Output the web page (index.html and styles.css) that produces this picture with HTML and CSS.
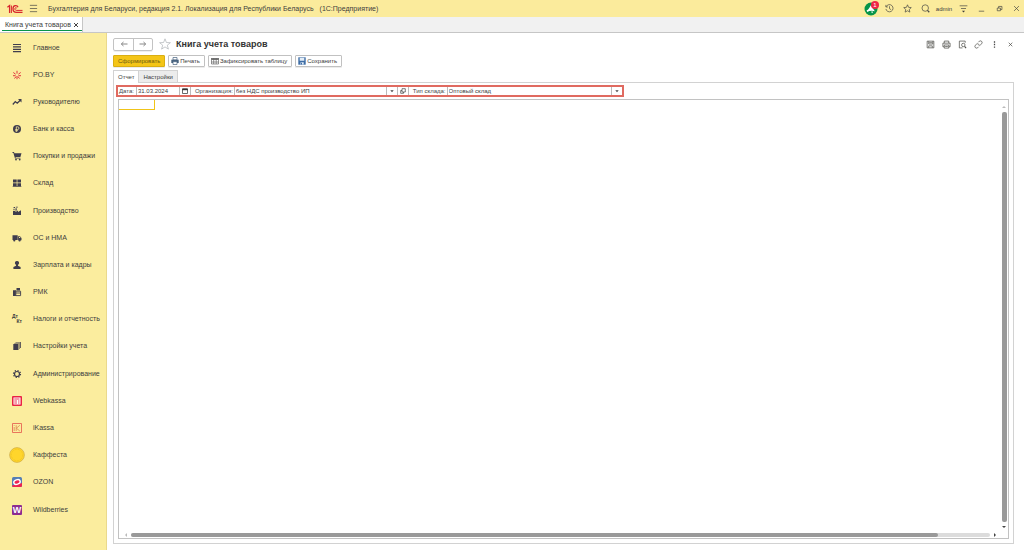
FILE: index.html
```html
<!DOCTYPE html>
<html lang="ru">
<head>
<meta charset="utf-8">
<meta name="viewport" content="width=device-width, initial-scale=1">
<title>Книга учета товаров</title>
<link rel="stylesheet" href="styles.css">
</head>
<body class="app">
<header class="topbar">
  <svg class="logo" viewBox="0 0 16 10" aria-label="1С"><g fill="none" stroke="#d8272d" stroke-width="1.3"><path d="M.4 3.2 2.6 1.5V9"/><path d="M4.4 1.5V9" stroke-width="1"/><path d="M11 3.3C10.300 1 6 .8 6 4.700 6 7.600 7.600 8.400 9.500 8.400H15.500"/><path d="M9.800 4.300C9.200 3.300 7.800 3.500 7.900 4.900 8 6.300 8.900 6.400 10 6.400H15.500" stroke-width="1"/></g></svg>
  <button class="icon-btn" aria-label="Меню"><svg class="ic ic-menu" viewBox="0 0 10 10"><path d="M1 1.500H9M1 5H9M1 8.500H9"/></svg></button>
  <h1 class="app-title"><span>Бухгалтерия для Беларуси, редакция 2.1. Локализация для Республики Беларусь</span><span>(1С:Предприятие)</span></h1>
  <div class="top-actions">
    <button class="icon-btn notify" aria-label="Уведомления"><svg class="ic-bell" viewBox="0 0 14 14"><circle cx="7" cy="7" r="6.500" fill="#079548"/><path d="M2.600 8.300C4.500 7.700 5.500 5.800 6.800 3.200L10.800 9.300C8.500 8.300 5.500 8.500 3.200 10ZM6.800 9.800 9 9.600 8.400 11.200Z" fill="#fff"/></svg><span class="badge">1</span></button>
    <button class="icon-btn" aria-label="История"><svg class="ic" viewBox="0 0 10 10"><path d="M1.300 3A4 4 0 1 1 1 5.500M1 1V3.300H3.200M5 2.500V5.200L6.800 6.300"/></svg></button>
    <button class="icon-btn" aria-label="Избранное"><svg class="ic" viewBox="0 0 10 10"><path d="M5 .9 6.200 3.700 9.200 4 7 6 7.600 9 5 7.500 2.400 9 3 6 .8 4 3.800 3.700Z"/></svg></button>
    <button class="icon-btn" aria-label="Поиск"><svg class="ic" viewBox="0 0 10 10"><circle cx="4.700" cy="4.500" r="3.600"/><path d="M7.200 7 9.200 9.200" stroke-width="1.400"/></svg></button>
    <button class="user">admin</button>
    <button class="icon-btn" aria-label="Настройки панели"><svg class="ic" viewBox="0 0 10 10"><path d="M.7 2H9.300M2.200 5H7.800"/><path d="M3.300 7.500H6.700L5 9.500Z" fill="#3b3b3b" stroke="none"/></svg></button>
    <button class="icon-btn" aria-label="Свернуть"><svg class="ic" viewBox="0 0 10 10"><path d="M2 8H8"/></svg></button>
    <button class="icon-btn" aria-label="Восстановить"><svg class="ic" viewBox="0 0 10 10"><path d="M2.500 4.500H6V7.500H2.500ZM4 4.500V2.700H7.700V6.200H6"/></svg></button>
    <button class="icon-btn close" aria-label="Закрыть"><svg class="ic" viewBox="0 0 10 10"><path d="M2.300 2.300 7.700 7.700M7.700 2.300 2.300 7.700"/></svg></button>
  </div>
</header>
<div class="tabbar">
  <div class="doc-tab"><span>Книга учета товаров</span><button class="tab-close" aria-label="Закрыть вкладку"><svg viewBox="0 0 6 6"><path d="M1 1 5 5M5 1 1 5" stroke="#444" stroke-width="1"/></svg></button></div>
</div>
<div class="workspace">
  <nav class="sidebar">
    <a class="item" href="#"><span class="pic"><svg viewBox="0 0 10 10"><path d="M1 1.500H9M1 3.900H9M1 6.300H9M1 8.700H9" stroke="#3f3d4d" stroke-width="1.200"/></svg></span>Главное</a>
    <a class="item" href="#"><span class="pic"><svg viewBox="0 0 10 10"><path d="M5 .8V3.600M5 6.400V9.200M1.300 2.500 3.600 4.200M8.700 2.500 6.400 4.200M1 5.700H3.600M9 5.700H6.400M2.500 8.500 4.200 6.400M7.500 8.500 5.800 6.400" stroke="#e0343e" stroke-width="1"/></svg></span>PO.BY</a>
    <a class="item" href="#"><span class="pic"><svg viewBox="0 0 10 10"><path d="M.8 7.500 3.300 4.600 5.200 6.200 8.300 3.200" fill="none" stroke="#3f3d4d" stroke-width="1.300"/><path d="M6 2H9.500V5.500Z" fill="#3f3d4d"/></svg></span>Руководителю</a>
    <a class="item" href="#"><span class="pic"><svg viewBox="0 0 10 10"><circle cx="5" cy="5" r="4" fill="#3f3d4d"/><path d="M4.300 8V2.800H5.600A1.300 1.300 0 0 1 5.600 5.500H3.300M3.300 6.700H6" fill="none" stroke="#fbed9e" stroke-width=".8"/></svg></span>Банк и касса</a>
    <a class="item" href="#"><span class="pic"><svg viewBox="0 0 10 10"><path d="M.5 1H2L2.400 2.200H9.500L8.400 6H3.500L3.700 6.800H8.500V7.600H3L1.400 1.900H.5Z" fill="#3f3d4d"/><circle cx="4" cy="8.600" r=".9" fill="#3f3d4d"/><circle cx="7.700" cy="8.600" r=".9" fill="#3f3d4d"/></svg></span>Покупки и продажи</a>
    <a class="item" href="#"><span class="pic"><svg viewBox="0 0 10 10"><path d="M1 1.500H4.700V4.600H1ZM5.400 1.500H9V4.600H5.400ZM1 5.300H4.700V8H1ZM5.400 5.300H9V8H5.400ZM.7 8.300H9.300V9H.7Z" fill="#3f3d4d"/></svg></span>Склад</a>
    <a class="item" href="#"><span class="pic"><svg viewBox="0 0 10 10"><path d="M1 9V5H3.500V6L6 4.500V6L9 4.200V9ZM1.500 4.300V2.700H2.500V4.300ZM1.600 1H3V2H1.600ZM3.500 4.800V2.300H4.700V4.500ZM3.800 .8H5.800V1.600H3.800Z" fill="#3f3d4d"/></svg></span>Производство</a>
    <a class="item" href="#"><span class="pic"><svg viewBox="0 0 10 10"><path d="M.5 2.300H5.700V7H.5ZM6.100 3.300H8L9.500 5V7.300H6.100Z" fill="#3f3d4d"/><path d="M7 4H7.900L8.600 5H7Z" fill="#fbed9e"/><circle cx="2.300" cy="7.500" r="1.100" fill="#3f3d4d"/><circle cx="7.600" cy="7.500" r="1.100" fill="#3f3d4d"/></svg></span>ОС и НМА</a>
    <a class="item" href="#"><span class="pic"><svg viewBox="0 0 10 10"><path d="M5 1A2 2 0 0 1 6.300 4.600L5.900 5.700 8.600 7V9H1.400V7L4.100 5.700 3.700 4.600A2 2 0 0 1 5 1Z" fill="#3f3d4d"/></svg></span>Зарплата и кадры</a>
    <a class="item" href="#"><span class="pic"><svg viewBox="0 0 10 10"><path d="M1 3.300H4V9H1ZM4.500 1H8V3.500H4.500Z" fill="#3f3d4d"/><path d="M3.800 4.200H8.600V8.600H3.800ZM4 6H8.500" fill="#fbed9e" stroke="#3f3d4d" stroke-width=".9"/></svg></span>РМК</a>
    <a class="item" href="#"><span class="pic dtkt"><span>Дт</span><span>Кт</span></span>Налоги и отчетность</a>
    <a class="item" href="#"><span class="pic"><svg viewBox="0 0 10 10"><path d="M1.300 3H6.500V9H1.300ZM2.300 2H7.500V8H7V2.500H2.300ZM3.500 1H8.800V7H8V1.500H3.500Z" fill="#3f3d4d"/></svg></span>Настройки учета</a>
    <a class="item" href="#"><span class="pic"><svg viewBox="0 0 10 10"><circle cx="5" cy="5" r="2.500" fill="none" stroke="#3f3d4d" stroke-width="1.200"/><circle cx="5" cy="5" r="3.500" fill="none" stroke="#3f3d4d" stroke-width="1.200" stroke-dasharray="1.250 1.500"/></svg></span>Администрирование</a>
    <a class="item" href="#"><span class="pic"><svg viewBox="0 0 10 10"><rect width="10" height="10" rx="1" fill="#ea2344"/><path d="M1.500 1.500H8.500V8.500H1.500Z" fill="#fff"/><path d="M2.300 3H7.500M2.300 5H5M6 5H7.500M2.300 7H5M6 7H7.500" stroke="#ea2344" stroke-width=".9"/></svg></span>Webkassa</a>
    <a class="item" href="#"><span class="pic"><svg viewBox="0 0 10 10"><path d="M.5 .5H9.500V9.500H.5Z" fill="none" stroke="#e4574b" stroke-width=".8"/><path d="M2.200 4V8M2.200 2.200V3M4.200 2.200V8M7.800 2.300 4.400 5.200 7.800 8" fill="none" stroke="#dd8650" stroke-width=".8"/></svg></span>iKassa</a>
    <a class="item" href="#"><span class="pic"><svg class="big" viewBox="0 0 16 16"><circle cx="8" cy="8" r="7.400" fill="#ffd52b" stroke="#c4a245" stroke-width=".6"/><circle cx="8" cy="8" r="5.700" fill="none" stroke="#e5b91d" stroke-width=".6" stroke-dasharray=".8 .8"/></svg></span>Каффеста</a>
    <a class="item" href="#"><span class="pic"><svg viewBox="0 0 10 10"><rect width="10" height="10" rx="1.500" fill="#557eb5"/><path d="M0 8.500 10 6V8.500Q10 10 8.500 10H1.500Q0 10 0 8.500Z" fill="#ed2350"/><ellipse cx="5" cy="5" rx="3.300" ry="2.300" fill="#ed2350" stroke="#fff" stroke-width="1.400" transform="rotate(-18 5 5)"/></svg></span>OZON</a>
    <a class="item" href="#"><span class="pic wb">W</span>Wildberries</a>
  </nav>
  <main class="form">
    <div class="form-head">
      <div class="history"><button aria-label="Назад"><svg viewBox="0 0 8 6"><path d="M7.500 3H1.500M3.500 1 1.300 3 3.500 5"/></svg></button><button aria-label="Вперед"><svg viewBox="0 0 8 6"><path d="M.5 3H6.500M4.500 1 6.700 3 4.500 5"/></svg></button></div>
      <button class="icon-btn fav" aria-label="В избранное"><svg viewBox="0 0 12 12"><path d="M6 .8 7.400 4.500 11.400 4.700 8.300 7.200 9.400 11.100 6 8.900 2.600 11.100 3.700 7.200 .6 4.700 4.600 4.500Z" fill="none" stroke="#adb2b6" stroke-width=".7"/></svg></button>
      <h2 class="form-title">Книга учета товаров</h2>
      <div class="form-tools">
        <button class="icon-btn" aria-label="Сохранить отчет"><svg class="ic" viewBox="0 0 10 10"><path d="M1.300 1.300H8.700V8.700H1.300ZM3 1.500V4.500H7.500V1.500M3 8.500V6.500H7V8.500M3.500 3H7"/></svg></button>
        <button class="icon-btn" aria-label="Печать отчета"><svg class="ic" viewBox="0 0 10 10"><path d="M2.500 3.500V1.200H7.500V3.500M2.500 7.500H1V3.500H9V7.500H7.500M2.500 5.500H7.500V9H2.500ZM3.500 7.200H6.500"/></svg></button>
        <button class="icon-btn" aria-label="Просмотр"><svg class="ic" viewBox="0 0 10 10"><path d="M8 3V1.200H1.500V8.800H5"/><circle cx="5.900" cy="5.500" r="1.900"/><path d="M7.300 7 9 9" stroke-width="1.200"/></svg></button>
        <button class="icon-btn" aria-label="Ссылка"><svg class="ic" viewBox="0 0 10 10"><path d="M4.800 2.500 6 1.300Q7.300 .5 8.500 1.500 9.500 2.700 8.700 4L7 5.500Q5.800 6.300 4.800 5.300M5.200 7.500 4 8.700Q2.700 9.500 1.500 8.500 .5 7.300 1.300 6L3 4.500Q4.200 3.700 5.200 4.700"/></svg></button>
        <button class="icon-btn" aria-label="Еще"><svg class="ic" viewBox="0 0 10 10"><path d="M4.300 1.500H5.700V3H4.300ZM4.300 4.300H5.700V5.800H4.300ZM4.300 7.100H5.700V8.600H4.300Z" fill="#444" stroke="none"/></svg></button>
        <button class="icon-btn" aria-label="Закрыть форму"><svg class="ic" viewBox="0 0 10 10"><path d="M3 3 7 7M7 3 3 7"/></svg></button>
      </div>
    </div>
    <div class="commands">
      <button class="cmd primary">Сформировать</button>
      <button class="cmd"><svg viewBox="0 0 8 8"><path d="M2 .5H6V3H2Z" fill="#fff" stroke="#48637f" stroke-width=".7"/><path d="M.3 2.700H7.700V6H.3Z" fill="#48637f"/><path d="M2 4.700H6V7.500H2Z" fill="#fff" stroke="#48637f" stroke-width=".7"/></svg>Печать</button>
      <button class="cmd"><svg viewBox="0 0 8 8"><path d="M.3 1H7.700V3H.3Z" fill="#777"/><path d="M.5 1V7H7.500V1M.5 5H7.500M2.700 1V7M5.200 1V7" fill="none" stroke="#666" stroke-width=".7"/></svg>Зафиксировать таблицу</button>
      <button class="cmd"><svg viewBox="0 0 8 8"><path d="M.3 .3H7.700V7.700H.3Z" fill="#3e6da5"/><path d="M1.700 .7H6.300V3.800H1.700ZM2.500 5.300H5.700V7.500H2.500Z" fill="#e3edf7"/><path d="M3 5.700H4V7.500H3Z" fill="#3e6da5"/></svg>Сохранить</button>
    </div>
    <div class="tabs" role="tablist">
      <button class="tab active" role="tab" aria-selected="true">Отчет</button>
      <button class="tab" role="tab" aria-selected="false">Настройки</button>
    </div>
    <section class="panel">
      <div class="filters">
        <label for="date">Дата:</label>
        <div class="field date"><input id="date" type="text" value="31.03.2024"><button aria-label="Календарь"><svg viewBox="0 0 6 6"><path d="M.5 1H5.500V5.500H.5Z" fill="none" stroke="#444" stroke-width=".8"/><path d="M.3 .5H5.700V2.200H.3Z" fill="#333"/></svg></button></div>
        <label for="org">Организация:</label>
        <div class="field org"><input id="org" type="text" value="без НДС производство ИП"><button aria-label="Выбрать организацию"><svg viewBox="0 0 6 6"><path d="M1.300 2.300H4.700L3 4.200Z" fill="#444"/></svg></button><button aria-label="Открыть организацию"><svg viewBox="0 0 6 6"><path d="M2 .7H5.300V4H2ZM2 2.500H.7V5.300H3.500V4" fill="none" stroke="#444" stroke-width=".7"/></svg></button></div>
        <label for="kind">Тип склада:</label>
        <div class="field kind"><input id="kind" type="text" value="Оптовый склад"><button aria-label="Выбрать тип склада"><svg viewBox="0 0 6 6"><path d="M1.300 2.300H4.700L3 4.200Z" fill="#444"/></svg></button></div>
      </div>
      <div class="sheet">
        <div class="cells"><div class="cell"></div></div>
        <div class="vscroll"><i class="arrow up"></i><div class="track"></div><i class="arrow down"></i></div>
        <div class="hscroll"><i class="arrow left"></i><div class="track"><div class="thumb"></div></div><i class="arrow right"></i></div>
      </div>
    </section>
  </main>
</div>
</body>
</html>
```
FILE: styles.css
```css
* { box-sizing: border-box; }
.app {
  margin: 0;
  min-height: 100vh;
  display: flex;
  flex-direction: column;
  font: 7px/10px "Liberation Sans", Arial, sans-serif;
  color: #3d3d3d;
  background: #fff;
}
button, input { font: inherit; color: inherit; padding: 0; margin: 0; border: 0; background: none; }
svg { display: block; flex: none; }

.topbar { display: flex; align-items: center; height: 17px; padding: 0 0 0 7px; background: #fbeb9c; }
.logo { width: 16px; height: 10px; margin-right: 6px; }
.icon-btn { display: flex; align-items: center; justify-content: center; flex: none; }
.ic { width: 9px; height: 9px; fill: none; stroke: #4b4b45; stroke-width: .8; }
.app-title { flex: 1; display: flex; gap: 6px; margin: 0 0 0 10px; font-size: 7px; font-weight: 400; white-space: nowrap; }
.top-actions { display: flex; align-items: center; }
.top-actions .icon-btn { width: 18px; }
.top-actions .close { width: 16px; }
.top-actions .notify { position: relative; }
.ic-bell { width: 14px; height: 14px; }
.badge { position: absolute; top: -1px; right: 1px; width: 8px; height: 8px; border-radius: 4px; background: #ef2745; color: #fff; font-size: 6px; line-height: 8px; }
.user { width: 20px; font-size: 6px; }

.tabbar { display: flex; height: 16px; background: #f1f1f1; border-bottom: 1px solid #c6c6c6; }
.doc-tab { display: flex; align-items: center; gap: 2px; padding: 0 3px 0 5px; background: #fff; border-right: 1px solid #c6c6c6; box-shadow: inset 2px 0 #fff, inset 0 -1px #fff, inset 0 -2px #079548; }
.tab-close svg { width: 6px; height: 6px; }

.workspace { flex: 1; display: flex; }
.sidebar { display: flex; flex-direction: column; flex: none; width: 107px; padding: 1px 0 27px 12px; background: #fbed9e; border-right: 1px solid #ead98c; }
.item { flex: 1; display: flex; align-items: center; gap: 11px; color: inherit; text-decoration: none; white-space: nowrap; }
.pic { display: flex; align-items: center; justify-content: center; flex: none; width: 10px; height: 10px; }
.pic svg { width: 10px; height: 10px; }
.pic .big { width: 16px; height: 16px; }
.dtkt { flex-direction: column; font-size: 5px; line-height: 5px; font-weight: 700; }
.dtkt span:first-child { align-self: flex-start; }
.dtkt span:last-child { align-self: flex-end; }
.wb { background: #8c2d91; color: #fff; font-size: 9px; font-weight: 700; border-radius: 1px; }

.form { flex: 1; min-width: 0; display: flex; flex-direction: column; padding: 4px 10px 6px 6px; }
.form-head { display: flex; align-items: center; height: 14px; }
.history { display: flex; border: 1px solid #c3c3c3; border-radius: 2px; box-shadow: 0 1px #eee; }
.history button { width: 19px; height: 11px; display: flex; align-items: center; justify-content: center; }
.history button + button { border-left: 1px solid #c3c3c3; }
.history svg { width: 8px; height: 6px; fill: none; stroke: #7a7a7a; stroke-width: .9; }
.fav { margin: 0 5px 0 6px; }
.fav svg { width: 12px; height: 12px; }
.form-title { margin: 0; font-size: 9px; line-height: 14px; font-weight: 700; color: #333; }
.form-tools { display: flex; margin-left: auto; margin-right: -4px; }
.form-tools .icon-btn { width: 16px; }

.commands { display: flex; gap: 3px; margin-top: 4px; }
.cmd { display: flex; align-items: center; gap: 1px; height: 12px; padding: 0 4px 0 2px; border: 1px solid #c1c1c1; border-radius: 1px; box-shadow: 0 1px #ececec; font-size: 6px; white-space: nowrap; }
.cmd svg { width: 8px; height: 8px; }
.primary { padding: 0 4px; background: #f4c517; border-color: #d9ae13; color: #6e5c14; }

.tabs { display: flex; margin-top: 3px; }
.tab { height: 12px; padding: 0 4px; border: 1px solid #d2d2d2; border-bottom: 0; background: #ececec; font-size: 6px; }
.tab.active { background: #fff; border-right: 0; margin-bottom: -1px; height: 13px; position: relative; }

.panel { flex: 1; display: flex; flex-direction: column; padding: 2px 4px 4px 2px; border: 1px solid #d2d2d2; }
.filters { display: flex; align-items: center; align-self: flex-start; width: 508px; max-width: 100%; height: 12px; border: 2px solid #e06a60; padding-left: 1px; font-size: 6px; }
.filters label { white-space: nowrap; color: #4a4a4a; }
.field { display: flex; height: 8px; border-left: 1px solid #bbb; }
.field input { flex: 1; min-width: 0; padding-left: 1px; outline: 0; }
.field button { width: 11px; display: flex; align-items: center; justify-content: center; border-left: 1px solid #bbb; }
.field svg { width: 6px; height: 6px; }
.date { width: 55px; margin: 0 4px 0 2px; border-right: 1px solid #bbb; }
.org { width: 175px; margin: 0 4px 0 1px; border-right: 1px solid #bbb; }
.kind { flex: 1; margin-left: 1px; }

.sheet { flex: 1; display: grid; grid-template: 1fr 7px / 1fr 8px; margin: 2px 0 0 2px; border: 1px solid #c2c2c2; }
.cell { width: 36px; height: 10px; border: solid #f0c419; border-width: 0 1px 1px 0; }
.vscroll { display: flex; flex-direction: column; align-items: center; gap: 4px; padding: 6px 0 3px; }
.vscroll .track { flex: 1; width: 5px; border-radius: 2px; background: #999; }
.hscroll { grid-column: 1 / -1; display: flex; align-items: center; gap: 4px; padding: 0 12px 0 6px; }
.hscroll .track { flex: 1; height: 4px; border-radius: 2px; background: #dcdcdc; }
.thumb { width: 94%; height: 4px; border-radius: 2px; background: #999; }
.arrow { border: 2px solid transparent; }
.up { border-top: 0; border-bottom-color: #bbb; }
.down { border-bottom: 0; border-top-color: #444; }
.left { border-left: 0; border-right-color: #bbb; }
.right { border-right: 0; border-left-color: #444; }
```
